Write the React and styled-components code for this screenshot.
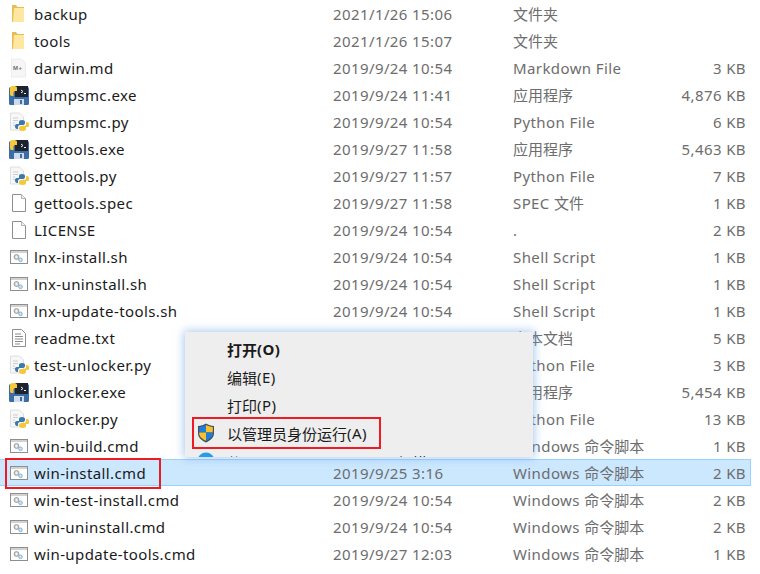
import styled, { createGlobalStyle } from "styled-components";

const GlobalStyle = createGlobalStyle`
  html, body {
    margin: 0;
    padding: 0;
    background: #fff;
  }
`;

const Page = styled.div`
  position: relative;
  width: 760px;
  height: 574px;
  box-sizing: border-box;
  overflow: hidden;
  font-family: "Noto Sans", "Noto Sans CJK SC", sans-serif;
  font-size: 15px;
  letter-spacing: 0.4px;
`;

const Cjk = styled.span`
  letter-spacing: 0;
`;

const FileRow = styled.div`
  position: relative;
  display: grid;
  grid-template-columns: 333px 180px 1fr 100px;
  align-items: center;
  width: 752px;
  height: 27px;
  margin-left: -1px;
  box-sizing: border-box;
  border: 1px solid ${(p) => (p.$selected ? "#99d1ff" : "transparent")};
  background: ${(p) => (p.$selected ? "#cce8ff" : "transparent")};

  ${(p) =>
    p.$marked &&
    `
    &::after {
      content: "";
      position: absolute;
      left: 5px;
      top: -2px;
      width: 152px;
      height: 27px;
      border: 2px solid #ed1c24;
    }
  `}
`;

const NameCell = styled.div`
  display: flex;
  align-items: center;
  gap: 5px;
  padding-left: 9px;
  color: #1a1a1a;
  white-space: nowrap;
`;

const Meta = styled.div`
  color: #6d6d6d;
  white-space: nowrap;
`;

const SizeCell = styled(Meta)`
  text-align: right;
  padding-right: 4px;
`;

const IconBox = styled.svg`
  display: block;
  flex: none;
  width: 20px;
  height: 20px;
`;

const ContextMenu = styled.div`
  position: absolute;
  left: 185px;
  top: 332px;
  width: 348px;
  height: 125px;
  box-sizing: border-box;
  padding-top: 3px;
  overflow: hidden;
  background: #eeeeee;
  color: #1a1a1a;
  box-shadow: 0 0 9px 1px rgba(120, 170, 235, 0.65);
`;

const MenuItem = styled.div`
  position: relative;
  display: flex;
  align-items: center;
  box-sizing: border-box;
  height: 28px;
  padding-left: 42px;
  padding-top: ${(p) => (p.$clipped ? "3px" : "0")};
  font-weight: ${(p) => (p.$bold ? 700 : 400)};
  white-space: nowrap;

  ${(p) =>
    p.$marked &&
    `
    &::after {
      content: "";
      position: absolute;
      left: 7px;
      top: -2px;
      width: 185px;
      height: 28px;
      border: 2px solid #ed1c24;
    }
  `}
`;

const MenuIcon = styled.span`
  position: absolute;
  left: 11px;
  top: 4px;
  line-height: 0;
`;

const Folder = () => (
  <IconBox viewBox="0 0 20 20">
    <path d="M3 1h4l1.500 2H15v15H3z" fill="#e9bd55" />
    <path d="M5 4h10v14H4z" fill="#ffe7a2" />
  </IconBox>
);

const Blank = () => (
  <IconBox viewBox="0 0 20 20">
    <path d="M3.500 1.500h9l4 4v13h-13z" fill="#fff" stroke="#8f8f8f" />
    <path d="M12.500 1.500v4h4" fill="#f1f1f1" stroke="#b5b5b5" />
  </IconBox>
);

const Markdown = () => (
  <IconBox viewBox="0 0 20 20">
    <path d="M2.500 1h10l4 4v14h-14z" fill="#f6f6f6" stroke="#ececec" />
    <text x="4" y="12" fontSize="6" fontWeight="700" fontFamily="Liberation Sans, sans-serif" fill="#6f6f6f">M+</text>
  </IconBox>
);

const TextDoc = () => (
  <IconBox viewBox="0 0 20 20">
    <path d="M3.500 1.500h9l4 4v13h-13z" fill="#fff" stroke="#8f8f8f" />
    <path d="M6 6h6M6 8.500h8M6 11h8M6 13.500h8M6 16h5" stroke="#8a8a8a" />
  </IconBox>
);

const Script = () => (
  <IconBox viewBox="0 0 20 20">
    <rect x="1.500" y="3.500" width="17" height="13" fill="#fff" stroke="#8e8e8e" />
    <path d="M2 4h16v2H2z" fill="#d2d2d2" />
    <circle cx="7.500" cy="10" r="2.400" fill="#dcdcdc" stroke="#9a9a9a" />
    <circle cx="7.500" cy="10" r=".8" fill="#fff" />
    <circle cx="11.500" cy="12.800" r="1.800" fill="#cfe6f5" stroke="#7fb2d8" />
  </IconBox>
);

const Snake = () => (
  <>
    <path d="M13 8c-2 0-3 .8-3 2v2H8c-1.600 0-2 1-2 2.500S7 17 8 17h1v-2c0-1 .8-2 2-2h3c1 0 2-.8 2-2V10c0-1.200-1-2-3-2z" fill="#3b78ab" />
    <path d="M14 19c2 0 3-.8 3-2v-2h2c1 0 1-1 1-2.500S19.500 10 18 10h-1v2c0 1.200-.8 2-2 2h-3c-1 0-2 .8-2 2v1c0 1.200 2 2 4 2z" fill="#f5c83c" />
  </>
);

const PyFile = () => (
  <IconBox viewBox="0 0 20 20">
    <path d="M1.500 1h9l4 4v13h-13z" fill="#f7f7f7" stroke="#dedede" />
    <path d="M4 6h5M4 8.500h5M4 11h2M4 13.500h2" stroke="#cfcfcf" />
    <Snake />
  </IconBox>
);

const ExeFile = () => (
  <IconBox viewBox="0 0 20 20">
    <rect x="0" y="2" width="20" height="18" rx="1.500" fill="#3a6ea5" />
    <rect x="6" y="1" width="13" height="11" fill="#1c2430" />
    <path d="M12 5l2 1.500-2 1.500M15 8.500h2" stroke="#f2f2f2" fill="none" />
    <path d="M1 3c0-1.500 1.500-2 3.500-2S8 1.600 8 3v3H6c-1 0-1.500.8-1.500 2v3H2.500C1.200 11 1 9.500 1 8z" fill="#f6c83a" />
    <rect x="5" y="14" width="10" height="6" fill="#cfdbe8" />
    <rect x="11" y="15" width="2" height="4" fill="#3a6ea5" />
  </IconBox>
);

const Shield = () => (
  <svg width="20" height="20" viewBox="0 0 20 20">
    <path d="M10 0.500c2.500 1.600 5 2.300 8 2.500v7.500c0 4-3.500 7-8 9-4.500-2-8-5-8-9V3c3-.2 5.500-.9 8-2.500z" fill="#46505c" />
    <path d="M10 2v7.500H3.200V4c2.600-.2 4.700-.8 6.800-2z" fill="#1f7fd6" />
    <path d="M10 2c2.100 1.200 4.200 1.800 6.800 2v5.500H10z" fill="#f9c02f" />
    <path d="M3.200 9.500H10v8.300c-3.600-1.600-6.800-4.200-6.800-7.300z" fill="#f9c02f" />
    <path d="M16.800 9.500H10v8.300c3.600-1.600 6.800-4.200 6.800-7.300z" fill="#1f7fd6" />
  </svg>
);

const Globe = () => (
  <svg width="20" height="20" viewBox="0 0 20 20">
    <circle cx="10" cy="10" r="8.500" fill="#2b9be4" />
  </svg>
);

const icons = {
  folder: Folder,
  blank: Blank,
  md: Markdown,
  txt: TextDoc,
  script: Script,
  py: PyFile,
  exe: ExeFile,
};

const files = [
  ["folder", "backup", "2021/1/26 15:06", "文件夹", ""],
  ["folder", "tools", "2021/1/26 15:07", "文件夹", ""],
  ["md", "darwin.md", "2019/9/24 10:54", "Markdown File", "3 KB"],
  ["exe", "dumpsmc.exe", "2019/9/24 11:41", "应用程序", "4,876 KB"],
  ["py", "dumpsmc.py", "2019/9/24 10:54", "Python File", "6 KB"],
  ["exe", "gettools.exe", "2019/9/27 11:58", "应用程序", "5,463 KB"],
  ["py", "gettools.py", "2019/9/27 11:57", "Python File", "7 KB"],
  ["blank", "gettools.spec", "2019/9/27 11:58", "SPEC 文件", "1 KB"],
  ["blank", "LICENSE", "2019/9/24 10:54", ".", "2 KB"],
  ["script", "lnx-install.sh", "2019/9/24 10:54", "Shell Script", "1 KB"],
  ["script", "lnx-uninstall.sh", "2019/9/24 10:54", "Shell Script", "1 KB"],
  ["script", "lnx-update-tools.sh", "2019/9/24 10:54", "Shell Script", "1 KB"],
  ["txt", "readme.txt", "2019/9/24 10:54", "文本文档", "5 KB"],
  ["py", "test-unlocker.py", "2019/9/24 10:54", "Python File", "3 KB"],
  ["exe", "unlocker.exe", "2019/9/24 11:41", "应用程序", "5,454 KB"],
  ["py", "unlocker.py", "2019/9/24 10:54", "Python File", "13 KB"],
  ["script", "win-build.cmd", "2019/9/24 10:54", "Windows 命令脚本", "1 KB"],
  ["script", "win-install.cmd", "2019/9/25 3:16", "Windows 命令脚本", "2 KB", true],
  ["script", "win-test-install.cmd", "2019/9/24 10:54", "Windows 命令脚本", "2 KB"],
  ["script", "win-uninstall.cmd", "2019/9/24 10:54", "Windows 命令脚本", "2 KB"],
  ["script", "win-update-tools.cmd", "2019/9/27 12:03", "Windows 命令脚本", "1 KB"],
];

// the Latin letters run wider than the Chinese ones in the original font
const mixed = (text) =>
  text.split(/([\u4e00-\u9fff]+)/).map((part, i) => (i % 2 ? <Cjk key={i}>{part}</Cjk> : part));

export default function App() {
  return (
    <Page>
      <GlobalStyle />
      {files.map(([icon, name, date, type, size, selected]) => {
        const Icon = icons[icon];
        return (
          <FileRow key={name} $selected={selected} $marked={selected}>
            <NameCell>
              <Icon />
              {name}
            </NameCell>
            <Meta>{date}</Meta>
            <Meta>{mixed(type)}</Meta>
            <SizeCell>{size}</SizeCell>
          </FileRow>
        );
      })}
      <ContextMenu>
        <MenuItem $bold>{mixed("打开(O)")}</MenuItem>
        <MenuItem>{mixed("编辑(E)")}</MenuItem>
        <MenuItem>{mixed("打印(P)")}</MenuItem>
        <MenuItem $marked>
          <MenuIcon><Shield /></MenuIcon>
          {mixed("以管理员身份运行(A)")}
        </MenuItem>
        <MenuItem $clipped>
          <MenuIcon><Globe /></MenuIcon>
          {mixed("使用 Windows Defender扫描...")}
        </MenuItem>
      </ContextMenu>
    </Page>
  );
}
